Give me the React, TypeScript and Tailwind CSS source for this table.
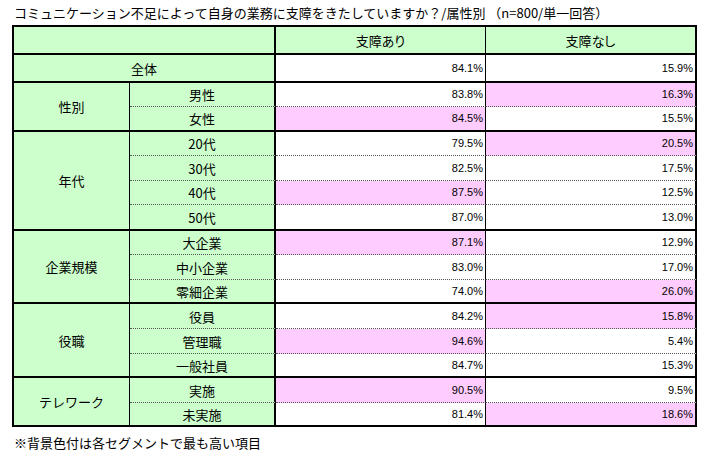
import React from "react";

type Row = { label: string; yes: string; no: string; hi?: "yes" | "no"; h: string };
type Group = { name: string; rows: Row[] };

const groups: Group[] = [
  {
    name: "性別",
    rows: [
      { label: "男性", yes: "83.8%", no: "16.3%", hi: "no", h: "h-[24px]" },
      { label: "女性", yes: "84.5%", no: "15.5%", hi: "yes", h: "h-[25px]" },
    ],
  },
  {
    name: "年代",
    rows: [
      { label: "20代", yes: "79.5%", no: "20.5%", hi: "no", h: "h-[24px]" },
      { label: "30代", yes: "82.5%", no: "17.5%", h: "h-[25px]" },
      { label: "40代", yes: "87.5%", no: "12.5%", hi: "yes", h: "h-[24px]" },
      { label: "50代", yes: "87.0%", no: "13.0%", h: "h-[26px]" },
    ],
  },
  {
    name: "企業規模",
    rows: [
      { label: "大企業", yes: "87.1%", no: "12.9%", hi: "yes", h: "h-[24px]" },
      { label: "中小企業", yes: "83.0%", no: "17.0%", h: "h-[25px]" },
      { label: "零細企業", yes: "74.0%", no: "26.0%", hi: "no", h: "h-[24px]" },
    ],
  },
  {
    name: "役職",
    rows: [
      { label: "役員", yes: "84.2%", no: "15.8%", hi: "no", h: "h-[25px]" },
      { label: "管理職", yes: "94.6%", no: "5.4%", hi: "yes", h: "h-[25px]" },
      { label: "一般社員", yes: "84.7%", no: "15.3%", h: "h-[24px]" },
    ],
  },
  {
    name: "テレワーク",
    rows: [
      { label: "実施", yes: "90.5%", no: "9.5%", hi: "yes", h: "h-[25px]" },
      { label: "未実施", yes: "81.4%", no: "18.6%", hi: "no", h: "h-[24px]" },
    ],
  },
];

// numbers use an Arial-width face, labels the CJK face
const num = "font-['Liberation_Sans',Arial,sans-serif] text-[11px] leading-none text-right pr-[2px] p-0";

export default function App() {
  return (
    <div className="w-[707px] h-[456px] bg-white text-black font-['Noto_Sans_CJK_JP',sans-serif]">
      <div className="h-[25px] pt-[5px] pl-[14px] text-[13px] leading-[16px] whitespace-nowrap">
        コミュニケーション不足によって自身の業務に支障をきたしていますか？/属性別 （n=800/単一回答）
      </div>

      <table className="ml-[12px] w-[685px] table-fixed border-separate border-spacing-0 border-l-2 border-t-2 border-black text-[13px] leading-none">
        <colgroup>
          <col className="w-[116px]" />
          <col className="w-[146px]" />
          <col className="w-[210px]" />
          <col className="w-[211px]" />
        </colgroup>
        <tbody>
          <tr className="h-[28px]">
            <td colSpan={2} className="border-b-2 border-r-2 border-black bg-[#ccffcc] p-0" />
            <td className="border-b-2 border-r border-black bg-[#ccffcc] p-0 text-center [font-feature-settings:'palt']">
              支障あり
            </td>
            <td className="border-b-2 border-r-2 border-black bg-[#ccffcc] p-0 text-center [font-feature-settings:'palt']">
              支障なし
            </td>
          </tr>
          <tr className="h-[28px]">
            <td colSpan={2} className="border-b-2 border-r-2 border-black bg-[#ccffcc] p-0 text-center">全体</td>
            <td className={`border-b-2 border-r border-black bg-white ${num}`}>84.1%</td>
            <td className={`border-b-2 border-r-2 border-black bg-white ${num}`}>15.9%</td>
          </tr>
          {groups.map((g) =>
            g.rows.map((r, i) => {
              const last = i === g.rows.length - 1;
              const bottom = last ? "border-b-2 border-b-black" : "[border-bottom:1px_dotted_#555]";
              return (
                <tr key={g.name + r.label} className={r.h}>
                  {i === 0 && (
                    <td
                      rowSpan={g.rows.length}
                      className="border-b-2 border-r border-black bg-[#ccffcc] p-0 text-center"
                    >
                      {g.name}
                    </td>
                  )}
                  <td className={`${bottom} border-r-2 border-r-black bg-[#ccffcc] p-0 text-center`}>
                    {r.label}
                  </td>
                  <td
                    className={`${bottom} border-r border-r-black ${
                      r.hi === "yes" ? "bg-[#ffccff]" : "bg-white"
                    } ${num}`}
                  >
                    {r.yes}
                  </td>
                  <td
                    className={`${bottom} border-r-2 border-r-black ${
                      r.hi === "no" ? "bg-[#ffccff]" : "bg-white"
                    } ${num}`}
                  >
                    {r.no}
                  </td>
                </tr>
              );
            })
          )}
        </tbody>
      </table>

      <div className="mt-[8px] pl-[14px] text-[13px] leading-[16px]">※背景色付は各セグメントで最も高い項目</div>
    </div>
  );
}
